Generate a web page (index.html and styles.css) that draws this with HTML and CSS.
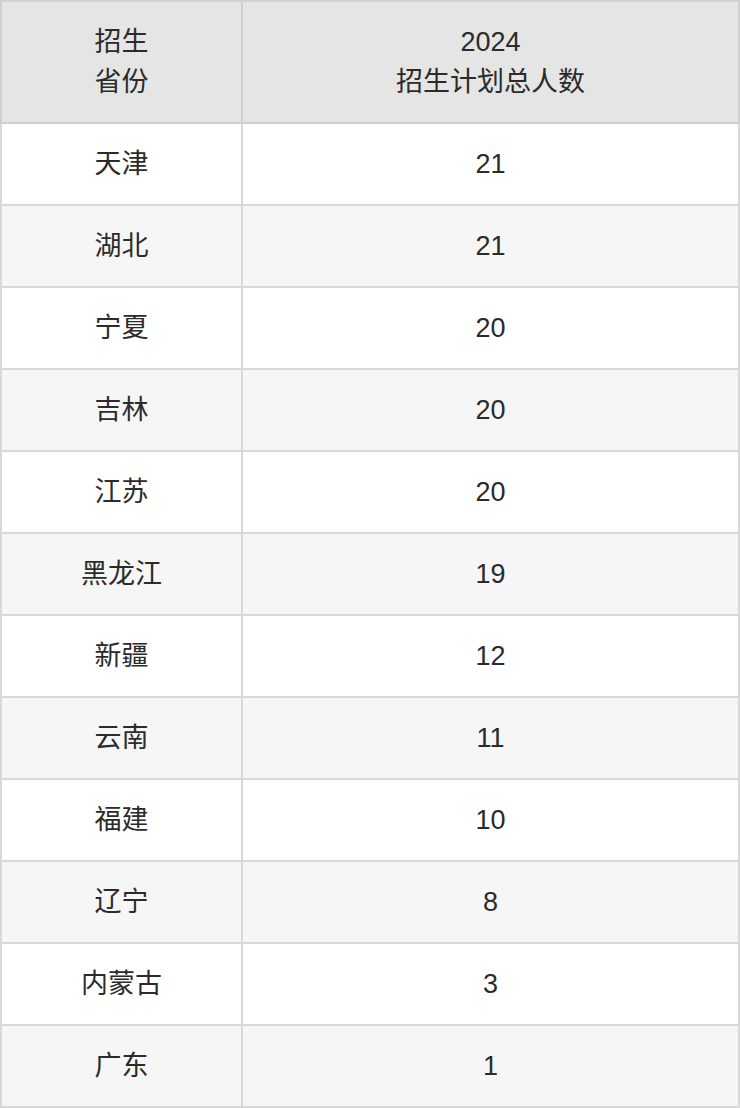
FILE: index.html
```html
<!DOCTYPE html>
<html lang="zh">
<head>
<meta charset="utf-8">
<link rel="stylesheet" href="styles.css">
</head>
<body>
<table class="plan">
  <thead>
    <tr>
      <th class="col-prov">招生<br>省份</th>
      <th class="col-num">2024<br>招生计划总人数</th>
    </tr>
  </thead>
  <tbody>
    <tr><td>天津</td><td>21</td></tr>
    <tr><td>湖北</td><td>21</td></tr>
    <tr><td>宁夏</td><td>20</td></tr>
    <tr><td>吉林</td><td>20</td></tr>
    <tr><td>江苏</td><td>20</td></tr>
    <tr><td>黑龙江</td><td>19</td></tr>
    <tr><td>新疆</td><td>12</td></tr>
    <tr><td>云南</td><td>11</td></tr>
    <tr><td>福建</td><td>10</td></tr>
    <tr><td>辽宁</td><td>8</td></tr>
    <tr><td>内蒙古</td><td>3</td></tr>
    <tr><td>广东</td><td>1</td></tr>
  </tbody>
</table>
</body>
</html>
```
FILE: styles.css
```css
html, body {
  margin: 0;
  padding: 0;
  background: #ffffff;
}

.plan {
  width: 740px;
  border-collapse: collapse;
  table-layout: fixed;
  font-family: "Liberation Sans", "Noto Sans CJK SC", sans-serif;
  font-size: 27px;
  color: #2b2b2b;
}

.plan th,
.plan td {
  border: 2px solid #d8d8d8;
  text-align: center;
  vertical-align: middle;
  padding: 0;
}

.plan th {
  height: 120px;
  background: #e5e5e5;
  font-weight: normal;
  line-height: 40px;
  border-color: #d0d0d0;
}

.col-prov {
  width: 239px;
}

.plan td {
  height: 80px;
  line-height: 30px;
}

.plan tbody tr:nth-child(even) td {
  background: #f6f6f6;
}
```
